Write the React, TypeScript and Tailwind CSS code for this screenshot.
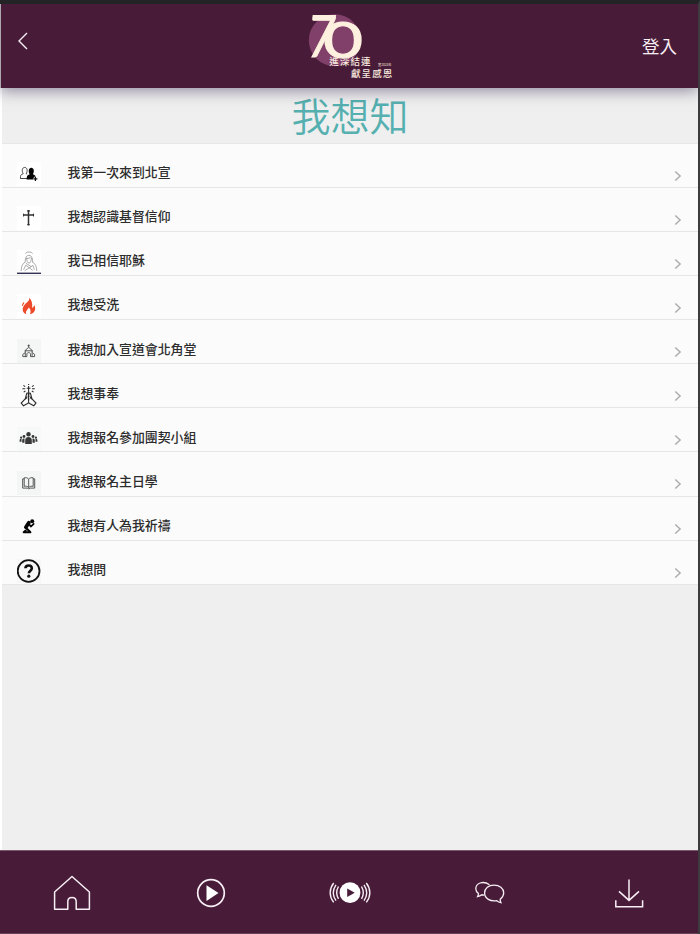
import type { ReactNode } from "react";

const menuItems: { label: string; icon: ReactNode; iconBg: string }[] = [
  { label: "我第一次來到北宣", icon: <NewcomerIcon />, iconBg: "bg-white" },
  { label: "我想認識基督信仰", icon: <CrossIcon />, iconBg: "bg-white" },
  { label: "我已相信耶穌", icon: <BelieverIcon />, iconBg: "bg-white" },
  { label: "我想受洗", icon: <FlameIcon />, iconBg: "bg-white" },
  { label: "我想加入宣道會北角堂", icon: <ChurchIcon />, iconBg: "bg-[#f4f5f5]" },
  { label: "我想事奉", icon: <ServeIcon />, iconBg: "bg-transparent" },
  { label: "我想報名參加團契小組", icon: <GroupIcon />, iconBg: "bg-[#f7f8f8]" },
  { label: "我想報名主日學", icon: <BookIcon />, iconBg: "bg-[#f4f6f6]" },
  { label: "我想有人為我祈禱", icon: <PrayIcon />, iconBg: "bg-transparent" },
  { label: "我想問", icon: <QuestionIcon />, iconBg: "bg-[#f7f7f7]" },
];

function NewcomerIcon() {
  return (
    <svg viewBox="0 0 24 24" className="w-6 h-6">
      <path d="M10.5 16.5H3.4c0-3 .3-4 2.8-4.8-1.6-2.8-1.1-6.3 1.5-6.3s3.1 3.5 1.5 6.3l1 .4" fill="none" stroke="#333" strokeWidth="0.9" />
      <path d="M9.6 17.4c0-3.3.8-4.3 3.1-5.1-1.7-2.8-1.1-6.6 1.6-6.6s3.3 3.8 1.6 6.6c2.3.8 3.1 1.8 3.1 5.1z" fill="#050505" />
      <path d="M18.4 14.7v4.4m-2.2-2.2h4.4" stroke="#fff" strokeWidth="2.4" />
      <path d="M18.4 14.9v4m-2-2h4" stroke="#111" strokeWidth="1.3" />
    </svg>
  );
}

function CrossIcon() {
  return (
    <svg viewBox="0 0 24 24" className="w-6 h-6" stroke="#333" strokeLinecap="round">
      <path d="M11.5 4.7v14M6.8 9h9.4" strokeWidth="1.5" />
      <path d="M10.5 4.9h2M10.5 18.7h2M6.6 8.1v1.8M16.5 8.1v1.8" strokeWidth="1.1" />
    </svg>
  );
}

function BelieverIcon() {
  return (
    <svg viewBox="0 0 24 24" className="w-6 h-6" fill="none" stroke="#888" strokeWidth="0.7">
      <path d="M8.4 3.6c1-2.2 6.2-2.2 7.2 0M8.2 12.4c0-3 .3-7 3.7-7s3.7 4 3.7 7M9.6 7.8c.2 3.7 1 5.2 2.4 5.2s2.2-1.5 2.4-5.2M9.6 8.6c2.4-.2 3.6-.8 4-1.6" />
      <path d="M8.4 12c-3 1.4-4 4.2-4.3 9M15.4 12c3 1.4 4 4.2 4.5 9M6.6 19.6l2.2-4.4 7 5.2M17.4 19.8 16 15.4l-8.4 5.4M9 13.4l5.4 3.2" />
      <path d="M0 23.3h24" stroke="#303052" strokeWidth="1.4" />
    </svg>
  );
}

function FlameIcon() {
  return (
    <svg viewBox="0 0 24 24" className="w-6 h-6">
      <path
        d="M12.3 3.7c.5 4.3-4.8 5.4-6.3 9.7-1 3 .5 5.8 3.3 6.8-1.2-3.6 1.5-4.4 2.5-6.8 2 2.1 2.2 4.4 1.2 6.8 4.8-1 6.3-5 4.4-9.2-.5 1.7-1.3 2.4-2.4 2.8.8-4.2-.4-7.7-2.7-10.1z"
        fill="#ed4a2b"
      />
      <path d="M7.1 8.5c-1.1 1.1-1.7 2.2-1.6 3.4" fill="none" stroke="#ed4a2b" strokeWidth="1.1" />
    </svg>
  );
}

function ChurchIcon() {
  return (
    <svg viewBox="0 0 24 24" className="w-6 h-6" fill="none" stroke="#484848" strokeWidth="0.9">
      <path d="M11.7 5.5v3M10.6 6.6h2.2M11.7 8.3 7.8 11.8h7.8zM8.3 11.8v5.6M15.1 11.8v5.6M8 13.8l-2.2 1.6v2.2h4.1v-2.4c0-2.2 3.6-2.2 3.6 0v2.4h4.1v-2.2l-2.2-1.6" />
    </svg>
  );
}

function ServeIcon() {
  return (
    <svg viewBox="0 0 24 24" className="w-6 h-6" fill="none" stroke="#2c2c2c" strokeWidth="1.1">
      <path d="M11.6 3v7M9.7 5.2h3.8M8.2 3.6 6.4 2.4M15 3.6l1.8-1.2M8.2 5.8H5.4M15 5.8h2.8M8.4 8 6.7 9.1M14.8 8l1.8 1.1M11.6 2V.9" />
      <path d="M11.4 20c.7-3 .4-6.2-.2-9.6-.7-.8-1.5-.4-1.6.4L8.2 16l-4 4 2.2 2.7 4.2-2.2zM11.8 20c-.7-3-.4-6.2.2-9.6.7-.8 1.5-.4 1.6.4L15 16l4 4-2.2 2.7-4.2-2.2zM8.1 16.3c1-.5 1.8-1.4 2.1-2.8M15.1 16.3c-1-.5-1.8-1.4-2.1-2.8" />
    </svg>
  );
}

function GroupIcon() {
  return (
    <svg viewBox="0 0 24 24" className="w-6 h-6" fill="#373737">
      <circle cx="11.5" cy="7.3" r="2.2" />
      <path d="M8.2 17v-4.1c0-4 6.6-4 6.6 0V17z" />
      <circle cx="7" cy="9.5" r="1.4" />
      <circle cx="16" cy="9.5" r="1.4" />
      <path d="M5.2 15.7v-2.4c0-1.5 1-2 2.3-1.9v4.3zM17.8 15.7v-2.4c0-1.5-1-2-2.3-1.9v4.3z" />
      <circle cx="4.1" cy="10.7" r="1.1" />
      <circle cx="18.9" cy="10.7" r="1.1" />
      <path d="M2.6 14.7v-1.3c0-1 .6-1.4 1.9-1.3v2.6zM20.4 14.7v-1.3c0-1-.6-1.4-1.9-1.3v2.6z" />
    </svg>
  );
}

function BookIcon() {
  return (
    <svg viewBox="0 0 24 24" className="w-6 h-6" fill="none" stroke="#444" strokeWidth="0.9">
      <path d="M11.7 8.2C10.6 6.7 9 6.5 7.2 6.8v8.5c1.8-.3 3.4 0 4.5 1.2 1.1-1.2 2.7-1.5 4.5-1.2V6.8c-1.8-.3-3.4-.1-4.5 1.4zM11.7 8.2v8.3M7.2 7.9H5.7v9.2h4.5l1.5.7 1.5-.7h4.5V7.9h-1.5" />
    </svg>
  );
}

function PrayIcon() {
  return (
    <svg viewBox="0 0 24 24" className="w-6 h-6" fill="none" stroke="#050505" strokeLinecap="round" strokeLinejoin="round">
      <circle cx="15.2" cy="6.2" r="2" fill="#050505" stroke="none" />
      <path d="M11.8 7.8 8.9 12.2" strokeWidth="3.8" />
      <path d="m11.8 8.8 2 2.8 2.9-2.8" strokeWidth="1.7" />
      <path d="m9 12.8 4.4 4.5H6.7l2-1.8" strokeWidth="2" />
    </svg>
  );
}

function QuestionIcon() {
  return (
    <svg viewBox="0 0 24 24" className="w-6 h-6">
      <circle cx="11.6" cy="12" r="10.9" fill="none" stroke="#111" strokeWidth="1.8" />
      <path d="M8.4 9.3c.2-3.7 6.3-3.7 6.4-.1.1 2.3-2.9 2.6-2.9 5" fill="none" stroke="#111" strokeWidth="2.6" />
      <circle cx="11.8" cy="17.2" r="1.6" fill="#111" />
    </svg>
  );
}

function Logo() {
  return (
    <svg viewBox="0 0 100 76" className="w-[100px] h-[76px] overflow-visible">
      <circle cx="35.8" cy="36.3" r="26" fill="#81406a" />
      <g fill="#fdf0df" stroke="#fdf0df" strokeWidth="1" style={{ fontFamily: "Lato, sans-serif" }}>
        <text x="0" y="0" fontSize="58" fontWeight="400" transform="translate(7.2 53.4) skewX(-6) scale(.8 1)">7</text>
        <text x="0" y="0" fontSize="50" fontWeight="400" transform="translate(24 53.6) scale(1.38 1)">0</text>
      </g>
      <g fill="#f8e9de" style={{ fontFamily: "'Noto Sans CJK TC', sans-serif" }}>
        <text x="30.3" y="61.2" fontSize="9.5" fontWeight="500" letterSpacing="1.1">進深結連</text>
        <text x="52" y="73" fontSize="9.5" fontWeight="500" letterSpacing="1.1">獻呈感恩</text>
        <text x="79" y="61.8" fontSize="3.2">宣2023年</text>
      </g>
    </svg>
  );
}

function Chevron() {
  return (
    <svg viewBox="0 0 8 12" className="w-2 h-3" fill="none" stroke="#aaa" strokeWidth="1.4">
      <path d="m1.3 1.5 4.8 4.5-4.8 4.5" />
    </svg>
  );
}

function TabBar() {
  return (
    <nav className="h-[84.5px] shrink-0 bg-[#481c38] border-t border-t-[#79586d] border-b border-b-[#66445a] grid grid-cols-5 items-start text-[#f8eef5]">
      <button className="flex justify-center pt-[24px] pl-1" aria-label="home">
        <svg viewBox="0 0 38 36" className="w-[38px] h-9" fill="none" stroke="currentColor" strokeWidth="1.5" strokeLinejoin="round">
          <path d="M19 1.5 1.6 17v17.2h13.2v-7.5c0-5.5 8.4-5.5 8.4 0v7.5h13.2V17z" />
        </svg>
      </button>
      <button className="flex justify-center pt-[27px] pl-[3px]" aria-label="play">
        <svg viewBox="0 0 30 30" className="w-[30px] h-[30px]">
          <circle cx="15" cy="15" r="13.3" fill="none" stroke="currentColor" strokeWidth="1.7" />
          <path d="M10.5 7.2v15.7L22.5 15z" fill="#fff" />
        </svg>
      </button>
      <button className="flex justify-center pt-[29px] pl-[3px]" aria-label="live">
        <svg viewBox="0 0 44 26" className="w-11 h-[26px]" fill="none" stroke="currentColor" strokeWidth="1.4">
          <circle cx="22" cy="12.7" r="10.4" fill="#fff" stroke="none" />
          <path d="M19.2 8.5v8.4l7.5-4.2z" fill="#481c38" stroke="none" />
          <path d="M10.5 6.5c-2.3 4-2.3 8.4 0 12.4M8 4.8c-3.4 5-3.4 10.8 0 15.8M5.7 3c-4.7 6-4.7 13.4 0 19.4M33.5 6.5c2.3 4 2.3 8.4 0 12.4M36 4.8c3.4 5 3.4 10.8 0 15.8M38.3 3c4.7 6 4.7 13.4 0 19.4" />
        </svg>
      </button>
      <button className="flex justify-center pt-[29px] pl-0.5" aria-label="chat">
        <svg viewBox="0 0 30 26" className="w-[30px] h-[26px]" fill="none" stroke="currentColor" strokeWidth="1.3">
          <path d="M14.5 4.8C8 .2.8 3.3.8 8.7c0 2 .9 3.5 2.7 4.8-.1 1.3-.3 2-.9 3.1 1.8-.2 3-.8 4.2-1.8l2.5.3" />
          <path d="M19 5.1c-5.4 0-9.4 3.3-9.4 8 0 5.4 5.8 8.8 12.2 7.6 1 .9 2.1 1.6 4.1 1.9-.6-1.2-.7-2.1-.7-3.4 2.2-1.6 3.5-3.7 3.5-6.1 0-4.7-4.3-8-9.7-8z" />
        </svg>
      </button>
      <button className="flex justify-center pt-[27px] pl-px" aria-label="download">
        <svg viewBox="0 0 30 30" className="w-[30px] h-[30px]" fill="none" stroke="currentColor" strokeWidth="1.5">
          <path d="M15 1.5v20.8M5 13.4l10 9 10-9M1.8 22.2v6.6h26.8v-6.6" />
        </svg>
      </button>
    </nav>
  );
}

export default function App() {
  return (
    <div className="w-[700px] h-[934px] overflow-hidden bg-[#efefef] flex flex-col border-t-4 border-t-[#242426] border-r-2 border-r-[#3c3c3e] font-['Noto_Sans_CJK_TC',sans-serif]">
      {/* HEADER */}
      <header className="relative z-10 h-[84px] shrink-0 bg-[#481c38] border-l border-[#b0a8b0] grid grid-cols-3 shadow-[0_3px_14px_rgba(50,40,80,0.5)]">
        <button className="pt-[28px] pl-4 self-start" aria-label="back">
          <svg viewBox="0 0 12 18" className="w-3 h-[18px]" fill="none" stroke="#f8eef5" strokeWidth="1.4">
            <path d="M10 1 2 9l8 8" />
          </svg>
        </button>
        <div className="justify-self-center">
          <Logo />
        </div>
        <button className="justify-self-end self-start pt-[29px] pr-[21px] text-[17.5px] leading-[26px] text-[#f8eef5]">
          登入
        </button>
      </header>

      <main className="flex-1 min-h-0 border-l-2 border-white">
        <h1 className="h-[54.5px] text-center text-[39px] leading-[52px] font-[350] text-[#56b0b0]">我想知</h1>

        <ul className="border-t border-[#e7e7e7]">
          {menuItems.map((item) => (
            <li key={item.label} className="h-[44.15px] flex items-start bg-[#fbfbfb] border-b border-[#e6e6e6] pl-[15px] pr-4">
              <span className={`mt-[18.5px] w-6 h-6 shrink-0 ${item.iconBg}`}>{item.icon}</span>
              <span className="mt-[18.5px] ml-[26.5px] flex-1 text-[12.9px] leading-5 font-medium text-[#2c2c2c]">
                {item.label}
              </span>
              <span className="mt-[26px]">
                <Chevron />
              </span>
            </li>
          ))}
        </ul>
      </main>

      <TabBar />
    </div>
  );
}
